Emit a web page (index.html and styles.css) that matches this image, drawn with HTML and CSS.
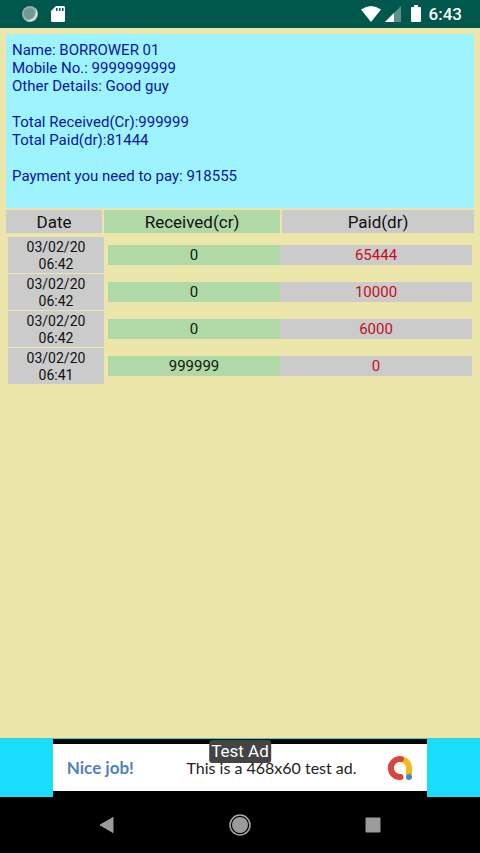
FILE: index.html
```html
<!DOCTYPE html>
<html lang="en">
<head>
<meta charset="utf-8">
<meta name="viewport" content="width=device-width, initial-scale=1">
<title>Borrower account</title>
<link rel="stylesheet" href="styles.css">
</head>
<body>
<header class="status">
  <div class="status-group">
    <svg width="18" height="18" viewBox="0 0 18 18" aria-hidden="true"><circle cx="9" cy="9" r="8" fill="#8fafa9"/><path d="M14 2.800A8 8 0 0 1 4 15.200A9 9 0 0 0 14 2.800Z" fill="#d3e0de"/><circle cx="8.500" cy="8.500" r="5.500" fill="#719a92"/></svg>
    <svg width="14" height="18" viewBox="0 0 14 18" aria-hidden="true"><path d="M5 1H12.500Q14 1 14 2.500V15.500Q14 17 12.500 17H1.500Q0 17 0 15.500V6Z" fill="#fff"/><path d="M5 3h1.500v3H5zM8 3h1.500v3H8zM11 3h1.500v3H11z" fill="#00574b"/></svg>
  </div>
  <div class="status-group status-right">
    <svg width="20" height="18" viewBox="0 0 20 18" aria-hidden="true"><path d="M0 4.500Q10-2.500 20 4.500L10 17Z" fill="#fff"/></svg>
    <svg class="signal" width="16" height="18" viewBox="0 0 16 18" aria-hidden="true"><path d="M0 17L16 1V17Z" fill="#5c918a"/><path d="M0 17L9 8V17Z" fill="#fff"/></svg>
    <svg class="battery" width="10" height="18" viewBox="0 0 10 18" aria-hidden="true"><path d="M3 0H7V2H9Q10 2 10 3V16Q10 17 9 17H1Q0 17 0 16V3Q0 2 1 2H3Z" fill="#fff"/></svg>
    <time>6:43</time>
  </div>
</header>
<main class="content">
  <section class="summary">
    <p>Name: BORROWER 01<br>Mobile No.: 9999999999<br>Other Details: Good guy</p>
    <p>Total Received(Cr):999999<br>Total Paid(dr):81444</p>
    <p>Payment you need to pay: 918555</p>
  </section>
  <table class="ledger">
    <thead>
      <tr><th scope="col">Date</th><th scope="col" class="received">Received(cr)</th><th scope="col">Paid(dr)</th></tr>
    </thead>
    <tbody>
      <tr><td class="date">03/02/20<br>06:42</td><td class="received">0</td><td class="paid">65444</td></tr>
      <tr><td class="date">03/02/20<br>06:42</td><td class="received">0</td><td class="paid">10000</td></tr>
      <tr><td class="date">03/02/20<br>06:42</td><td class="received">0</td><td class="paid">6000</td></tr>
      <tr><td class="date">03/02/20<br>06:41</td><td class="received">999999</td><td class="paid">0</td></tr>
    </tbody>
  </table>
</main>
<aside class="ad">
  <div class="ad-frame">
    <div class="ad-banner">
      <span class="ad-cheer">Nice job!</span>
      <span class="ad-text">This is a 468x60 test ad.</span>
      <svg class="ad-logo" width="26" height="26" viewBox="0 0 26 26" fill="none" stroke-width="6" aria-hidden="true"><path d="M13 4A9 9 0 0 1 22 13V20" stroke="#f5b916"/><path d="M14 4.100A9 9 0 1 0 13.500 22" stroke="#d8453c" stroke-linecap="round"/><circle cx="22" cy="22" r="3" fill="#4386c8"/></svg>
    </div>
    <span class="ad-label">Test Ad</span>
  </div>
</aside>
<nav class="navbar">
  <button type="button" aria-label="Back"><svg width="24" height="24" viewBox="0 0 24 24"><path d="M5 12L18 4.500V19.500Z" fill="#9b9b9b" stroke="#9b9b9b" stroke-linejoin="round"/></svg></button>
  <button type="button" aria-label="Home"><svg width="24" height="24" viewBox="0 0 24 24"><circle cx="12" cy="12" r="10" fill="none" stroke="#aaa" stroke-width="1.500"/><circle cx="12" cy="12" r="8" fill="#9b9b9b"/></svg></button>
  <button type="button" aria-label="Recent apps"><svg width="24" height="24" viewBox="0 0 24 24"><rect x="4.500" y="4.500" width="15" height="15" rx="1" fill="#9b9b9b"/></svg></button>
</nav>
</body>
</html>
```
FILE: styles.css
```css
* { box-sizing: border-box; }

body {
  margin: 0;
  min-height: 100vh;
  display: flex;
  flex-direction: column;
  background: #ece6aa;
  color: #111;
  font: 16px/20px Roboto, sans-serif;
}

svg { display: block; }

.status {
  height: 28px;
  padding: 0 18px 0 21px;
  display: flex;
  align-items: center;
  justify-content: space-between;
  background: #00574b;
  color: #fff;
}

.status-group { display: flex; align-items: center; gap: 12px; }
.status-right { gap: 0; }
.signal { margin-left: 4px; }
.battery { margin: 0 8px 0 10px; }
.status time { font-size: 17px; line-height: 22px; font-weight: 500; }

.content { flex: 1; padding-top: 6px; }

.summary {
  margin: 0 6px 2px;
  padding: 7px 6px 23px;
  background: #9df4fe;
  color: #0814a8;
  font-size: 15px;
  line-height: 18px;
}

.summary p { margin: 0 0 18px; }
.summary p:last-child { margin-bottom: 0; }

.ledger { display: block; text-align: center; }
.ledger thead, .ledger tbody { display: block; }
.ledger tr { display: grid; }

.ledger thead tr {
  margin: 0 6px 4px;
  grid-template-columns: 96fr 176fr 192fr;
  gap: 2px;
}

.ledger tbody tr {
  margin: 0 8px 1px;
  grid-template-columns: 100fr 172fr 192fr;
  align-items: center;
}

.ledger th, .ledger td { padding: 0; background: #cbcbcb; }
.ledger th { padding-top: 1px; font-size: 17px; line-height: 22px; font-weight: 400; }
.ledger td { font-size: 15px; line-height: 20px; }
.ledger .date { margin-right: 4px; padding: 2px 0 0; font-size: 14px; line-height: 17px; }
.ledger .date + .received { color: #0c200c; }
.ledger .received { background: #b1d8a7; }
.ledger .paid { color: #c2101c; }

.ad { padding: 0 11%; background: #1adcff; border-top: 1px solid #38d4c4; }

.ad-frame {
  position: relative;
  padding: 5px 0 6px;
  background: #000;
}

.ad-banner {
  height: 47px;
  padding: 0 14px;
  display: flex;
  align-items: center;
  justify-content: space-between;
  background: #fff;
  font-family: Lato, sans-serif;
}

.ad-cheer { color: #4f82c4; font-size: 17px; font-weight: 700; }
.ad-text { margin-left: 22px; color: #222; }

.ad-label {
  position: absolute;
  top: 1px;
  left: 50%;
  transform: translateX(-50%);
  padding: 1px 2px;
  border-radius: 3px;
  background: #444;
  color: #fff;
  font-size: 17px;
  line-height: 21px;
  white-space: nowrap;
}

.navbar {
  height: 56px;
  padding: 0 41px;
  display: flex;
  align-items: center;
  background: #000;
}

.navbar button {
  flex: 1;
  height: 48px;
  padding: 0;
  display: grid;
  place-items: center;
  border: 0;
  background: none;
}
```
